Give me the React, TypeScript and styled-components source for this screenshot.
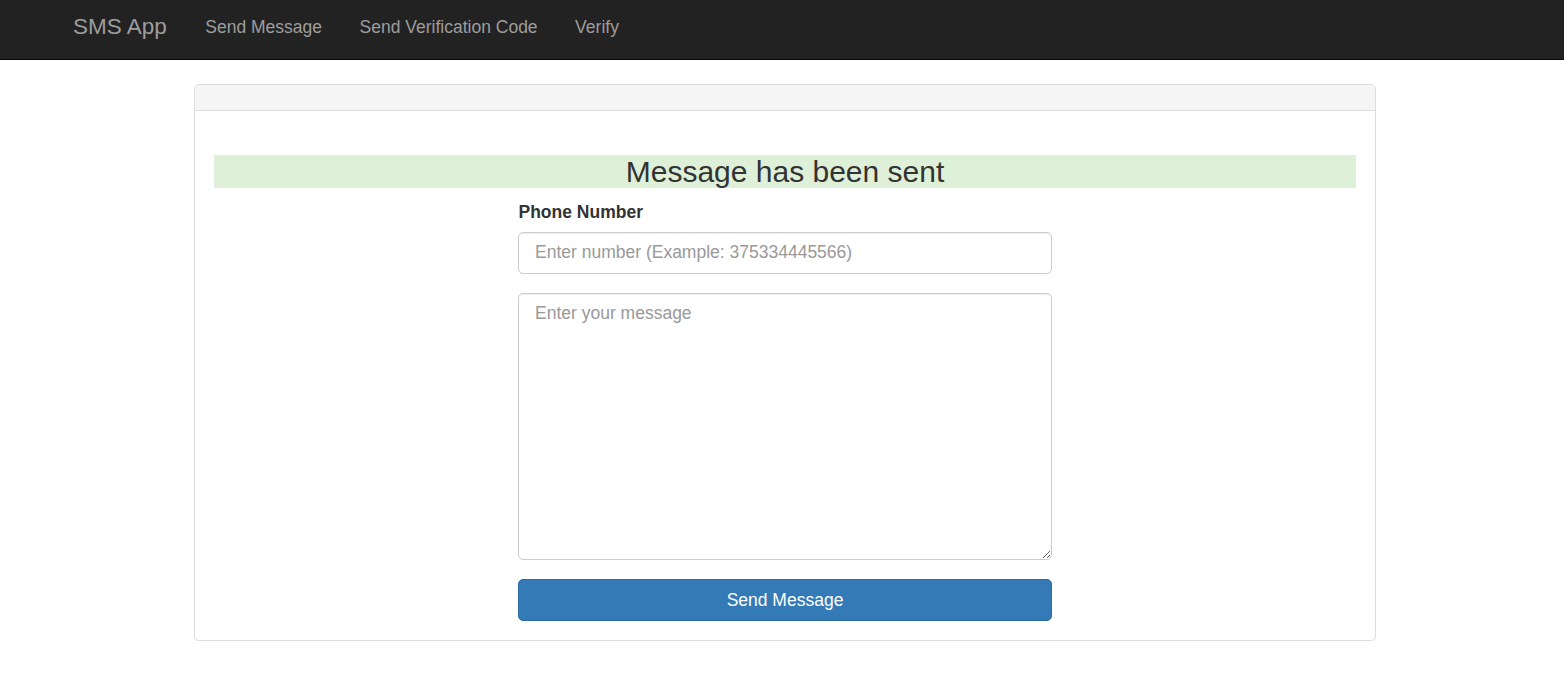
import React from "react";
import styled, { createGlobalStyle } from "styled-components";

const GlobalStyle = createGlobalStyle`
  html, body { margin: 0; padding: 0; background: #fff; }
  body {
    font-family: "Liberation Sans", Arial, Helvetica, sans-serif;
    font-size: 17.5px;
    line-height: 25px;
    color: #333;
  }
  * { box-sizing: border-box; }
`;

const NavBar = styled.nav`
  height: 60px;
  background: #222;
  border-bottom: 1px solid #080808;
  display: flex;
  align-items: flex-start;
  padding-left: 73px;
`;

const Brand = styled.a`
  font-size: 22.5px;
  line-height: 25px;
  padding-top: 14px;
  padding-right: 19.75px;
  color: #9d9d9d;
  text-decoration: none;
`;

const NavLink = styled.a`
  font-size: 17.5px;
  line-height: 25px;
  padding: 15px 18.75px 0;
  color: #9d9d9d;
  text-decoration: none;
`;

const Panel = styled.section`
  margin: 24px 0 0 194px;
  width: 1182px;
  border: 1px solid #ddd;
  border-radius: 5px;
  background: #fff;
  box-shadow: 0 1px 1px rgba(0, 0, 0, 0.05);
`;

const PanelHeading = styled.div`
  height: 26px;
  background: #f5f5f5;
  border-bottom: 1px solid #ddd;
  border-radius: 4px 4px 0 0;
`;

const PanelBody = styled.div`
  padding: 43.75px 19px 18.75px;
`;

const Alert = styled.h3`
  margin: 0 0 12.5px;
  font-size: 30px;
  line-height: 33px;
  font-weight: 400;
  text-align: center;
  background: #dff0d8;
  color: #333;
`;

const Form = styled.form`
  width: 534px;
  margin: 0 auto;
`;

const FormGroup = styled.div`
  margin-bottom: 18.75px;
  display: flex;
  flex-direction: column;
`;

const Label = styled.label`
  font-weight: 700;
  font-size: 17.5px;
  line-height: 25px;
  margin-bottom: 6.25px;
  padding-left: 0.5px;
`;

const fieldCss = `
  width: 100%;
  font-family: "Liberation Sans", Arial, Helvetica, sans-serif;
  font-size: 17.5px;
  line-height: 25px;
  color: #555;
  background: #fff;
  border: 1px solid #ccc;
  border-radius: 5px;
  box-shadow: inset 0 1px 1px rgba(0, 0, 0, 0.075);
  padding: 7.5px 16px;
  margin: 0;
  outline: none;
  &::placeholder { color: #999; opacity: 1; }
`;

const Input = styled.input`
  ${fieldCss}
  height: 42.5px;
`;

const TextArea = styled.textarea`
  ${fieldCss}
  height: 267px;
  resize: vertical;
  display: block;
`;

const SubmitButton = styled.button`
  width: 100%;
  height: 42.5px;
  font-family: "Liberation Sans", Arial, Helvetica, sans-serif;
  font-size: 17.5px;
  line-height: 25px;
  color: #fff;
  background: #337ab7;
  border: 1px solid #2e6da4;
  border-radius: 5px;
  padding: 1px 0 0;
  cursor: pointer;
  display: block;
`;

export default function App() {
  return (
    <>
      <GlobalStyle />
      <NavBar>
        <Brand href="#">SMS App</Brand>
        <NavLink href="#">Send Message</NavLink>
        <NavLink href="#">Send Verification Code</NavLink>
        <NavLink href="#">Verify</NavLink>
      </NavBar>
      <Panel>
        <PanelHeading />
        <PanelBody>
          <Alert>Message has been sent</Alert>
          <Form onSubmit={(e) => e.preventDefault()}>
            <FormGroup>
              <Label htmlFor="phone">Phone Number</Label>
              <Input id="phone" type="text" placeholder="Enter number (Example: 375334445566)" />
            </FormGroup>
            <FormGroup>
              <TextArea placeholder="Enter your message" />
            </FormGroup>
            <SubmitButton type="submit">Send Message</SubmitButton>
          </Form>
        </PanelBody>
      </Panel>
    </>
  );
}
